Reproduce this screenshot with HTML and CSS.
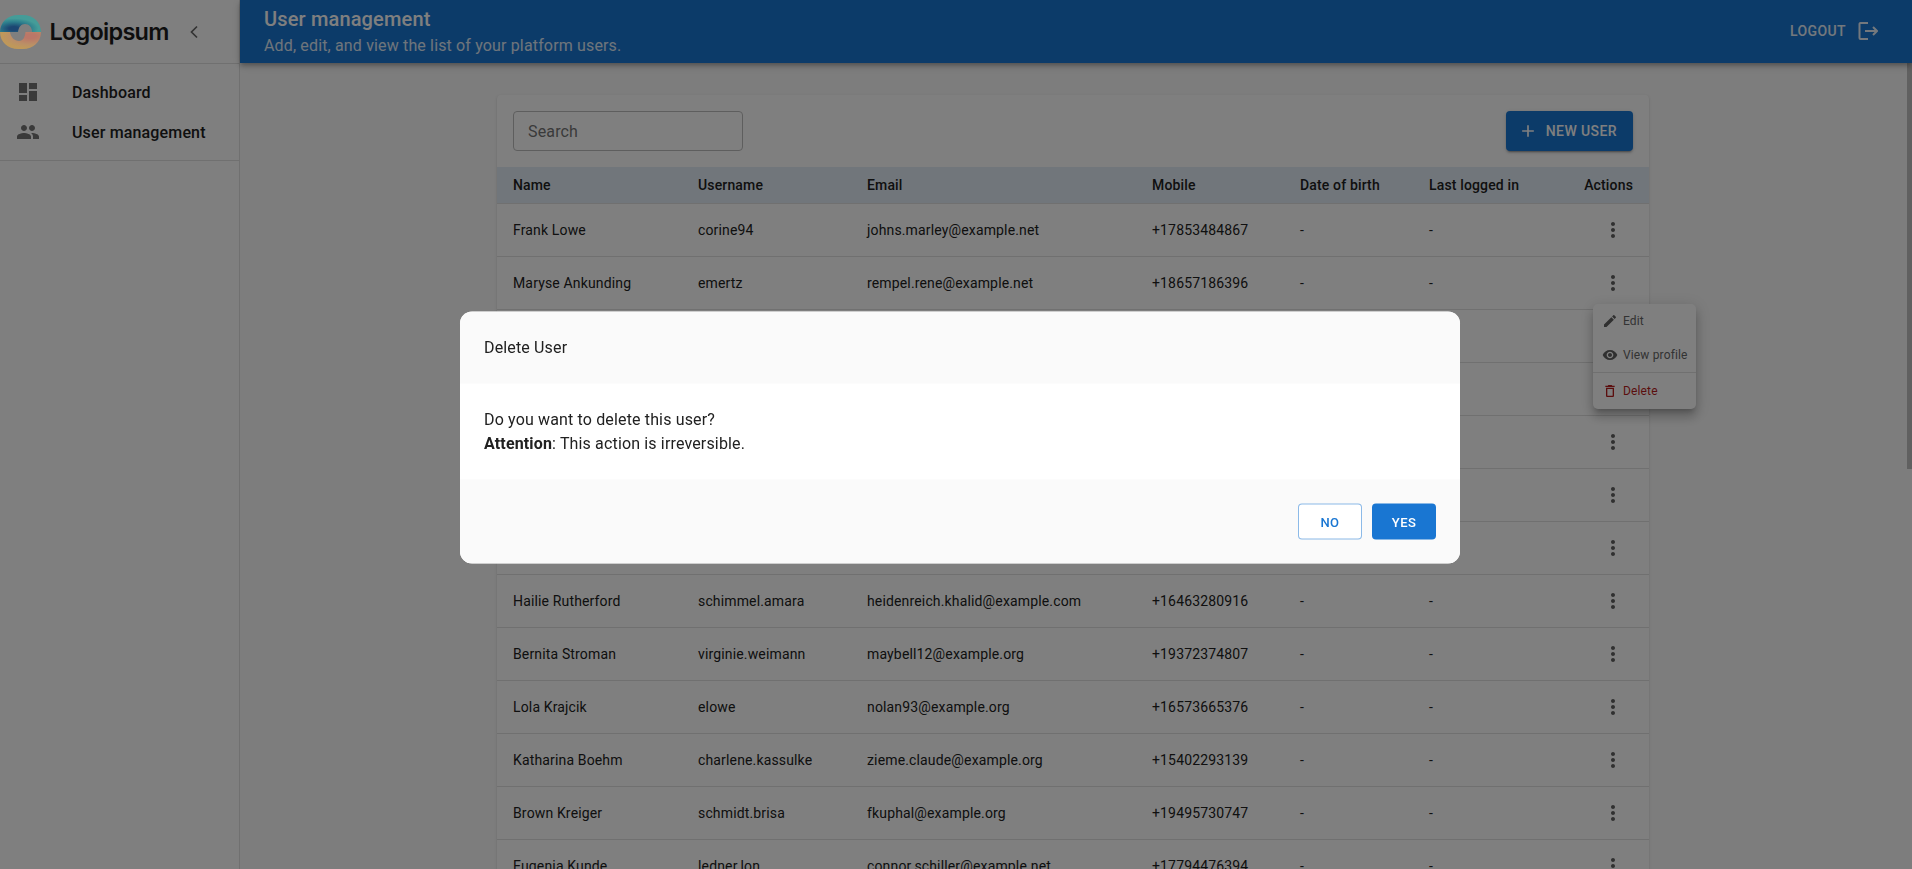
FILE: index.html
```html
<!DOCTYPE html>
<html lang="en">
<head>
  <meta charset="UTF-8" />
  <title>User management</title>
  <meta name="viewport" content="width=device-width, initial-scale=1" />
  <link rel="stylesheet" href="styles.css">
</head>
<body>
  <svg class="defs" width="0" height="0">
    <symbol id="more" viewBox="0 0 24 24"><path d="M12 8c1.1 0 2-.9 2-2s-.9-2-2-2-2 .9-2 2 .9 2 2 2zm0 2c-1.1 0-2 .9-2 2s.9 2 2 2 2-.9 2-2-.9-2-2-2zm0 6c-1.1 0-2 .9-2 2s.9 2 2 2 2-.9 2-2-.9-2-2-2z"/></symbol>
  </svg>

  <div class="app">
    <aside class="sidebar">
      <div class="brand">
        <svg class="logo" viewBox="0 0 41 34">
          <defs>
            <radialGradient id="logoTop" cx="0.34" cy="0.8" r="0.6">
              <stop offset="0.2" stop-color="#1c4672"/>
              <stop offset="0.65" stop-color="#2c7d8c"/>
              <stop offset="1" stop-color="#459c98"/>
            </radialGradient>
            <radialGradient id="logoBottom" cx="0.74" cy="0.25" r="0.7">
              <stop offset="0.2" stop-color="#bb7768"/>
              <stop offset="0.7" stop-color="#bb9066"/>
              <stop offset="1" stop-color="#bf985a"/>
            </radialGradient>
          </defs>
          <path fill="url(#logoTop)" d="M0 17C0 7 8 0 18 0h5c10 0 18 7 18 17z"/>
          <path fill="url(#logoBottom)" d="M0 17h41c0 10-8 17-18 17h-5C8 34 0 27 0 17z"/>
          <path fill="#7f7f7f" d="M32 17c0-5-3-8-7-8-4 0-6.500 3-7 8z"/>
          <path fill="#7f7f7f" d="M10 17c.5 5 4.500 9 9 9 4 0 6-4 6.500-9z"/>
        </svg>
        <span class="brand-name">Logoipsum</span>
        <button class="collapse">
          <svg viewBox="0 0 24 24"><path d="M15 6.500 9.500 12l5.500 5.500"/></svg>
        </button>
      </div>
      <nav class="nav">
        <a class="nav-item">
          <span class="nav-icon"><svg viewBox="0 0 24 24"><path d="M3 13h8V3H3v10zm0 8h8v-6H3v6zm10 0h8V11h-8v10zm0-18v6h8V3h-8z"/></svg></span>
          Dashboard
        </a>
        <a class="nav-item">
          <span class="nav-icon"><svg viewBox="0 0 24 24"><path d="M16 11c1.66 0 2.99-1.34 2.99-3S17.66 5 16 5c-1.66 0-3 1.34-3 3s1.34 3 3 3zm-8 0c1.66 0 2.99-1.34 2.99-3S9.66 5 8 5C6.34 5 5 6.34 5 8s1.34 3 3 3zm0 2c-2.33 0-7 1.17-7 3.5V19h14v-2.5c0-2.33-4.67-3.5-7-3.5zm8 0c-.29 0-.62.02-.97.05 1.16.84 1.97 1.97 1.97 3.45V19h6v-2.5c0-2.33-4.67-3.5-7-3.5z"/></svg></span>
          User management
        </a>
      </nav>
    </aside>

    <div class="content">
      <header class="topbar">
        <div class="page-title">
          <h1>User management</h1>
          <p>Add, edit, and view the list of your platform users.</p>
        </div>
        <button class="logout">
          Logout
          <svg viewBox="0 0 20 18"><path d="M10 1H2.500a1 1 0 0 0-1 1v14a1 1 0 0 0 1 1H10"/><path d="M7 9h12M15 5l4 4-4 4"/></svg>
        </button>
      </header>

      <div class="main-row">
        <main class="main">
          <section class="card">
            <div class="toolbar">
              <input class="search" placeholder="Search" />
              <button class="btn-new">
                <svg viewBox="0 0 24 24"><path d="M19 13h-6v6h-2v-6H5v-2h6V5h2v6h6v2z"/></svg>
                New user
              </button>
            </div>
            <table class="users">
              <colgroup>
                <col class="c-name"><col class="c-user"><col class="c-email"><col class="c-mobile"><col class="c-dob"><col class="c-last"><col class="c-actions">
              </colgroup>
              <thead>
                <tr><th>Name</th><th>Username</th><th>Email</th><th>Mobile</th><th>Date of birth</th><th>Last logged in</th><th class="right">Actions</th></tr>
              </thead>
              <tbody>
                <tr><td>Frank Lowe</td><td>corine94</td><td>johns.marley@example.net</td><td>+17853484867</td><td>-</td><td>-</td><td class="right"><button class="more"><svg><use href="#more"/></svg></button></td></tr>
                <tr><td>Maryse Ankunding</td><td>emertz</td><td>rempel.rene@example.net</td><td>+18657186396</td><td>-</td><td>-</td><td class="right actions-open"><button class="more"><svg><use href="#more"/></svg></button>
                  <div class="menu">
                    <a class="menu-item">
                      <svg viewBox="0 0 24 24"><path d="M3 17.25V21h3.75L17.81 9.94l-3.75-3.75L3 17.25zM20.71 7.04c.39-.39.39-1.02 0-1.41l-2.34-2.34c-.39-.39-1.02-.39-1.41 0l-1.83 1.83 3.75 3.75 1.83-1.83z"/></svg>
                      Edit
                    </a>
                    <a class="menu-item">
                      <svg viewBox="0 0 24 24"><path d="M12 4.500C7 4.500 2.730 7.610 1 12c1.730 4.390 6 7.500 11 7.500s9.270-3.110 11-7.500c-1.730-4.390-6-7.500-11-7.500zM12 17c-2.760 0-5-2.240-5-5s2.240-5 5-5 5 2.240 5 5-2.240 5-5 5zm0-8c-1.660 0-3 1.340-3 3s1.340 3 3 3 3-1.340 3-3-1.340-3-3-3z"/></svg>
                      View profile
                    </a>
                    <a class="menu-item danger">
                      <svg viewBox="0 0 24 24"><path d="M6 19c0 1.100.9 2 2 2h8c1.100 0 2-.9 2-2V7H6v12zM8 9h8v10H8V9zm7.500-5l-1-1h-5l-1 1H5v2h14V4z"/></svg>
                      Delete
                    </a>
                  </div>
                </td></tr>
                <tr><td>Dayna Hills</td><td>oconnell.rey</td><td>hills.dayna@example.com</td><td>+13164270185</td><td>-</td><td>-</td><td class="right"><button class="more"><svg><use href="#more"/></svg></button></td></tr>
                <tr><td>Owen Bartell</td><td>bartell.owen</td><td>owen38@example.org</td><td>+14052918837</td><td>-</td><td>-</td><td class="right"><button class="more"><svg><use href="#more"/></svg></button></td></tr>
                <tr><td>Celia Torp</td><td>ctorp</td><td>celia.torp@example.net</td><td>+12096631540</td><td>-</td><td>-</td><td class="right"><button class="more"><svg><use href="#more"/></svg></button></td></tr>
                <tr><td>Ansel Grant</td><td>grant.ansel</td><td>agrant@example.com</td><td>+15187420963</td><td>-</td><td>-</td><td class="right"><button class="more"><svg><use href="#more"/></svg></button></td></tr>
                <tr><td>Noemi Walsh</td><td>nwalsh</td><td>walsh.noemi@example.org</td><td>+17243390216</td><td>-</td><td>-</td><td class="right"><button class="more"><svg><use href="#more"/></svg></button></td></tr>
                <tr><td>Hailie Rutherford</td><td>schimmel.amara</td><td>heidenreich.khalid@example.com</td><td>+16463280916</td><td>-</td><td>-</td><td class="right"><button class="more"><svg><use href="#more"/></svg></button></td></tr>
                <tr><td>Bernita Stroman</td><td>virginie.weimann</td><td>maybell12@example.org</td><td>+19372374807</td><td>-</td><td>-</td><td class="right"><button class="more"><svg><use href="#more"/></svg></button></td></tr>
                <tr><td>Lola Krajcik</td><td>elowe</td><td>nolan93@example.org</td><td>+16573665376</td><td>-</td><td>-</td><td class="right"><button class="more"><svg><use href="#more"/></svg></button></td></tr>
                <tr><td>Katharina Boehm</td><td>charlene.kassulke</td><td>zieme.claude@example.org</td><td>+15402293139</td><td>-</td><td>-</td><td class="right"><button class="more"><svg><use href="#more"/></svg></button></td></tr>
                <tr><td>Brown Kreiger</td><td>schmidt.brisa</td><td>fkuphal@example.org</td><td>+19495730747</td><td>-</td><td>-</td><td class="right"><button class="more"><svg><use href="#more"/></svg></button></td></tr>
                <tr><td>Eugenia Kunde</td><td>ledner.lon</td><td>connor.schiller@example.net</td><td>+17794476394</td><td>-</td><td>-</td><td class="right"><button class="more"><svg><use href="#more"/></svg></button></td></tr>
              </tbody>
            </table>
          </section>
        </main>
        <div class="scrollbar"><div class="scroll-thumb"></div></div>
      </div>
    </div>
  </div>

  <div class="overlay">
    <div class="dialog">
      <div class="dialog-head">Delete User</div>
      <div class="dialog-body">
        Do you want to delete this user?<br>
        <strong>Attention</strong>: This action is irreversible.
      </div>
      <div class="dialog-foot">
        <button class="btn-no">No</button>
        <button class="btn-yes">Yes</button>
      </div>
    </div>
  </div>
</body>
</html>
```

FILE: styles.css
```css
* { box-sizing: border-box; }
body {
  margin: 0;
  font-family: Roboto, 'Liberation Sans', sans-serif;
  color: #212121;
  background: #fafafa;
  overflow: hidden;
}
button {
  font-family: inherit;
  cursor: pointer;
}
.defs { position: absolute; }
.app {
  display: flex;
  height: 100vh;
}

/* sidebar */
.sidebar {
  width: 240px;
  flex: none;
  background: #fff;
  border-right: 1px solid #e0e0e0;
}
.brand {
  height: 64px;
  display: flex;
  align-items: center;
  border-bottom: 1px solid #e0e0e0;
}
/* the logo stays bright in the reference, so it sits above the overlay */
.logo {
  width: 41px;
  height: 34px;
  flex: none;
  position: relative;
  z-index: 11;
}
.brand-name {
  margin-left: 8.5px;
  font-family: Inter, Roboto, sans-serif;
  font-size: 23.5px;
  font-weight: 600;
  letter-spacing: -0.75px;
  color: #1c1c1c;
}
.collapse {
  width: 24px;
  height: 24px;
  margin-left: 13px;
  padding: 0;
  border: none;
  background: none;
}
.collapse svg {
  display: block;
  fill: none;
  stroke: #666;
  stroke-width: 1.7;
}
.nav {
  padding: 8px 0;
  border-bottom: 1px solid #e0e0e0;
}
.nav-item {
  display: flex;
  align-items: center;
  height: 40px;
  padding-left: 16px;
  font-size: 16px;
  font-weight: 500;
  letter-spacing: 0.15px;
}
.nav-icon {
  width: 56px;
  flex: none;
  display: flex;
}
.nav-icon svg {
  width: 24px;
  height: 24px;
  fill: #757575;
}

/* top bar */
.content {
  flex: 1;
  min-width: 0;
  display: flex;
  flex-direction: column;
}
.topbar {
  height: 63px;
  flex: none;
  display: flex;
  justify-content: space-between;
  padding: 7px 34px 0 24px;
  background: #1976d2;
  color: #fff;
  box-shadow: 0 2px 4px -1px rgba(0,0,0,0.2), 0 4px 5px 0 rgba(0,0,0,0.14), 0 1px 10px 0 rgba(0,0,0,0.12);
  position: relative;
  z-index: 2;
}
.page-title h1 {
  margin: 0 0 3px;
  font-size: 20px;
  font-weight: 500;
  line-height: 24px;
  letter-spacing: 0.15px;
}
.page-title p {
  margin: 0;
  font-size: 16px;
  line-height: 24px;
  letter-spacing: 0.15px;
  opacity: 0.85;
}
.logout {
  display: flex;
  align-items: center;
  gap: 12px;
  height: 48px;
  padding: 0;
  border: none;
  background: none;
  color: #fff;
  font-size: 14px;
  font-weight: 500;
  letter-spacing: 0.4px;
  text-transform: uppercase;
  opacity: 0.9;
}
.logout svg {
  width: 20px;
  height: 18px;
  fill: none;
  stroke: #fff;
  stroke-width: 2;
}

/* main */
.main-row {
  flex: 1;
  min-height: 0;
  display: flex;
}
.main {
  flex: 1;
  min-width: 0;
  overflow: hidden;
  padding: 32px 33px 32px 32px;
}
.scrollbar {
  width: 5px;
  flex: none;
}
.scroll-thumb {
  height: 406px;
  background: #c1c1c1;
}
.card {
  max-width: 1152px;
  margin: 0 auto;
  background: #fff;
  border-radius: 4px;
  box-shadow: 0 2px 1px -1px rgba(0,0,0,0.2), 0 1px 1px 0 rgba(0,0,0,0.14), 0 1px 3px 0 rgba(0,0,0,0.12);
}
.toolbar {
  display: flex;
  justify-content: space-between;
  padding: 16px;
}
.search {
  width: 230px;
  height: 40px;
  padding: 0 14px;
  border: 1px solid #bdbdbd;
  border-radius: 4px;
  font-family: inherit;
  font-size: 16px;
  letter-spacing: 0.15px;
  outline: none;
}
.search::placeholder { color: #757575; opacity: 1; }
.btn-new {
  display: flex;
  align-items: center;
  gap: 8px;
  height: 40px;
  padding: 0 16px 0 12px;
  border: none;
  border-radius: 4px;
  background: #1976d2;
  color: #fff;
  font-size: 14px;
  font-weight: 500;
  letter-spacing: 0.4px;
  text-transform: uppercase;
  box-shadow: 0 3px 1px -2px rgba(0,0,0,0.2), 0 2px 2px 0 rgba(0,0,0,0.14), 0 1px 5px 0 rgba(0,0,0,0.12);
}
.btn-new svg {
  width: 20px;
  height: 20px;
  fill: #fff;
}

/* table */
.users {
  width: 100%;
  table-layout: fixed;
  border-collapse: collapse;
  font-size: 14px;
  letter-spacing: 0.15px;
}
.c-name { width: 185px; }
.c-user { width: 169px; }
.c-email { width: 285px; }
.c-mobile { width: 148px; }
.c-dob { width: 129px; }
.c-last { width: 122px; }
th, td {
  padding: 0 16px;
  text-align: left;
  white-space: nowrap;
  border-bottom: 1px solid #e0e0e0;
}
th {
  height: 36px;
  font-weight: 500;
  background: #e3edf7;
}
td { height: 53px; }
th.right, td.right { text-align: right; }
.more {
  width: 40px;
  height: 40px;
  padding: 8px;
  border: none;
  background: none;
  vertical-align: middle;
}
.more svg {
  display: block;
  width: 24px;
  height: 24px;
  fill: #616161;
}
.actions-open { position: relative; }

/* row menu */
.menu {
  position: absolute;
  top: 47px;
  right: -47px;
  z-index: 1;
  width: 103px;
  background: #fff;
  border-radius: 5px;
  text-align: left;
  box-shadow: 0 5px 5px -3px rgba(0,0,0,0.2), 0 8px 10px 1px rgba(0,0,0,0.14), 0 3px 14px 2px rgba(0,0,0,0.12);
}
.menu-item {
  display: flex;
  align-items: center;
  gap: 5px;
  height: 34px;
  padding-left: 9px;
  font-size: 12px;
  letter-spacing: 0.15px;
  color: #666;
}
.menu-item svg {
  width: 16px;
  height: 16px;
  flex: none;
  fill: #616161;
}
.menu-item.danger {
  height: 37px;
  border-top: 1px solid #e0e0e0;
  color: #b71c1c;
}
.menu-item.danger svg { fill: #b71c1c; }

/* delete dialog */
.overlay {
  position: fixed;
  inset: 0;
  z-index: 10;
  display: flex;
  align-items: center;
  justify-content: center;
  padding: 5px 0 0 8px;
  background: rgba(0,0,0,0.5);
}
.dialog {
  width: 1000px;
  border-radius: 12px;
  overflow: hidden;
  background: #fff;
  font-size: 16px;
  line-height: 24px;
  letter-spacing: 0.15px;
  transform: translateY(0.5px);
}
.dialog-head {
  padding: 24px;
  background: #fafafa;
}
.dialog-body { padding: 24px; }
.dialog-foot {
  display: flex;
  justify-content: flex-end;
  gap: 10px;
  padding: 24px;
  background: #fafafa;
}
.btn-no, .btn-yes {
  width: 64px;
  height: 36px;
  padding: 0;
  border-radius: 4px;
  font-size: 13px;
  font-weight: 500;
  letter-spacing: 0.4px;
  text-transform: uppercase;
}
.btn-no {
  border: 1px solid rgba(25,118,210,0.5);
  background: #fff;
  color: #1976d2;
}
.btn-yes {
  border: none;
  background: #1976d2;
  color: #fff;
}
```
